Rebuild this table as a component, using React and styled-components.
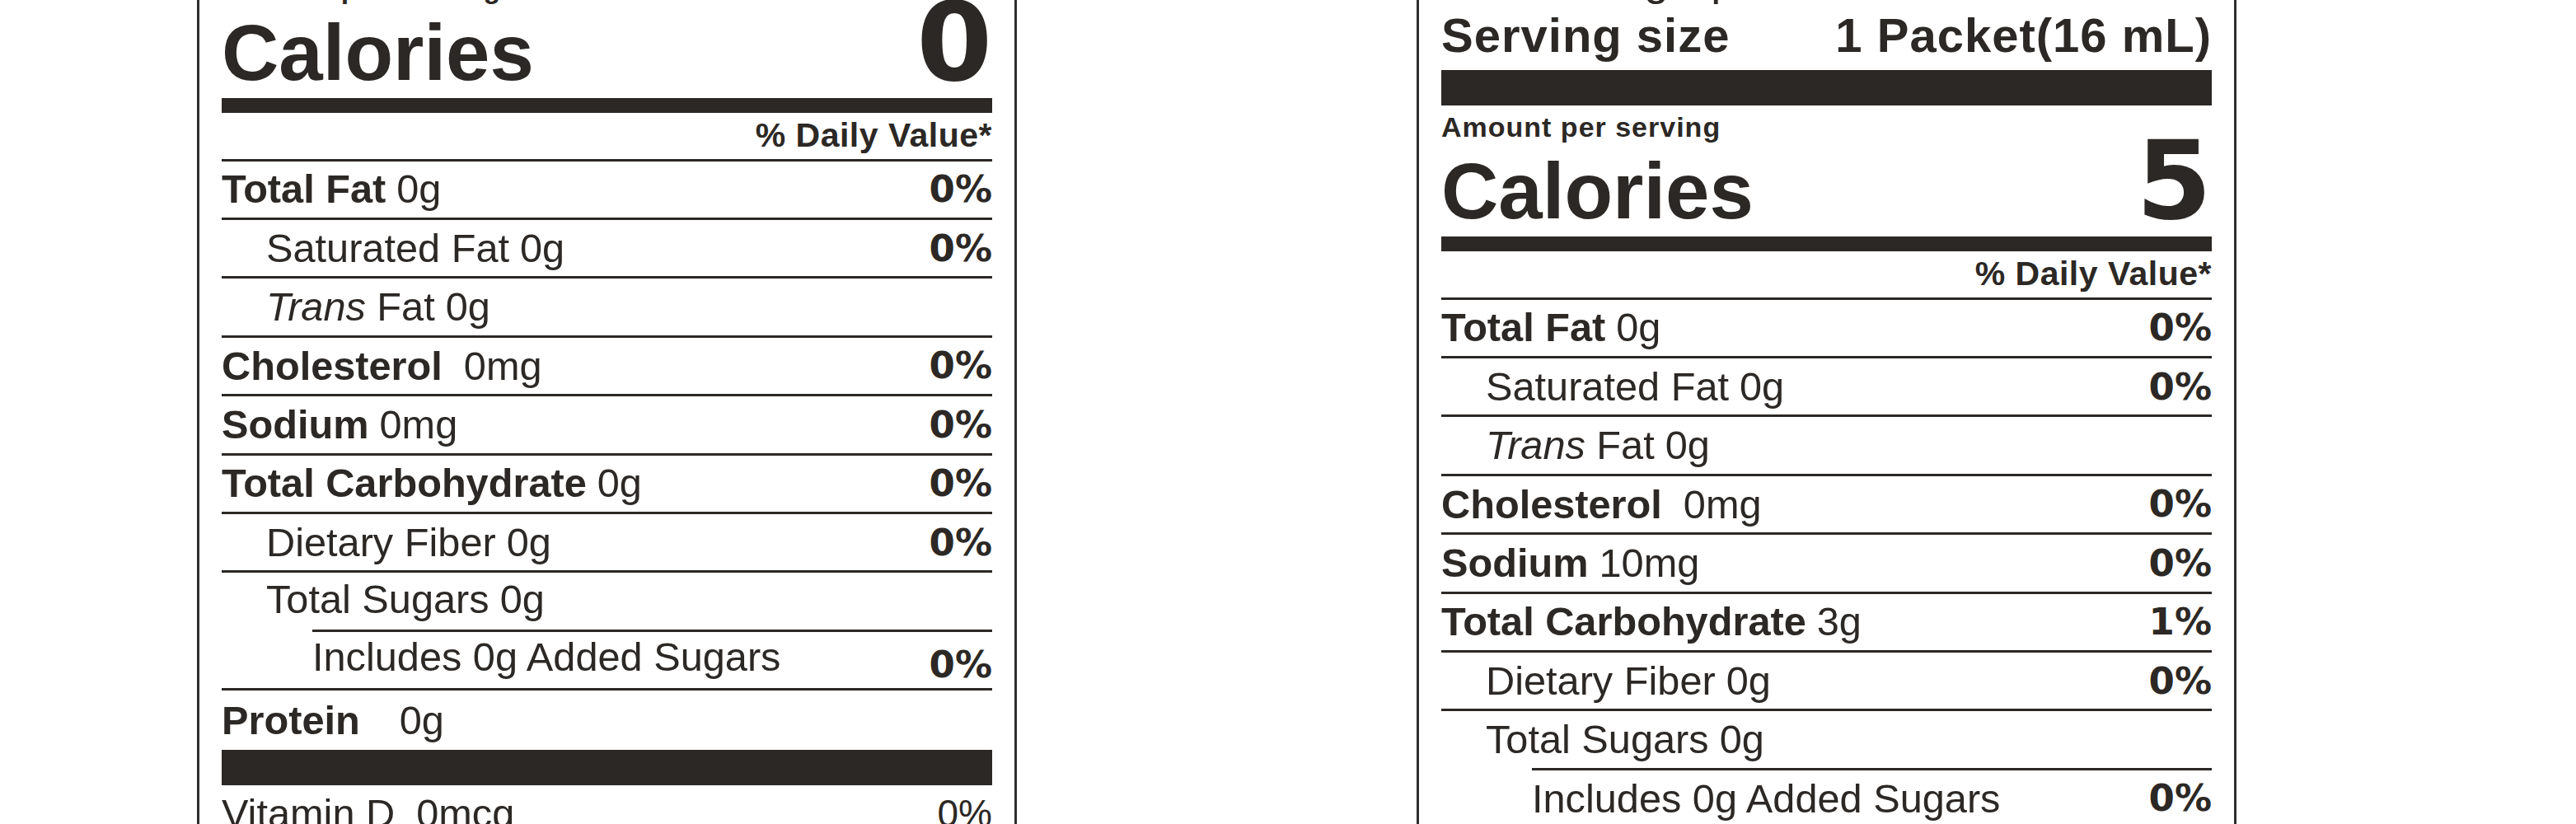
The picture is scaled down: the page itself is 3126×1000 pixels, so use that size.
import React from "react";
import styled, { createGlobalStyle } from "styled-components";

const INK = "#2c2825";

const GlobalStyle = createGlobalStyle`
  html, body {
    margin: 0;
    padding: 0;
    background: #ffffff;
    overflow: hidden;
  }
  body {
    font-family: "Liberation Sans", Arial, sans-serif;
    color: ${INK};
  }
`;

const Page = styled.main`
  display: flex;
  align-items: flex-start;
  gap: 485px;
  padding-left: 239px;
  margin-top: -176px; // the tops of both panels sit above the fold
`;

const Label = styled.section`
  box-sizing: border-box;
  width: 995px;
  flex: none;
  margin-top: ${(p) => (p.$lift ? -p.$lift : 0)}px;
  padding: 10px 27px 24px;
  border: 3px solid #2e2e2e;
  background: #fff;
  display: flex;
  flex-direction: column;
`;

const Title = styled.h1`
  margin: 0;
  font-size: 100px;
  line-height: 1;
  font-weight: 700;
  letter-spacing: -1px;
`;

const Rule = styled.div`
  height: ${(p) => p.$h || 3}px;
  margin-left: ${(p) => p.$inset || 0}px;
  background: ${INK};
  flex: none;
`;

const ServingsLine = styled.div`
  margin-top: 8px;
  font-size: 54px;
  line-height: 54px;
  letter-spacing: 3px;
`;

const ServingRow = styled.div`
  display: flex;
  justify-content: space-between;
  margin: 14px 0 15px;
  font-size: 58px;
  line-height: 54px;
  font-weight: 700;
  letter-spacing: 1px;
`;

const AmountLine = styled.div`
  margin-top: 12px;
  font-size: 34px;
  line-height: 28px;
  font-weight: 700;
  letter-spacing: 1px;
`;

const CaloriesRow = styled.div`
  display: flex;
  justify-content: space-between;
  align-items: baseline;
  margin-bottom: 7px;
`;

const CaloriesWord = styled.span`
  font-size: 96px;
  line-height: 1;
  font-weight: 700;
`;

const BigNumber = styled.span`
  font-family: "DejaVu Sans", sans-serif;
  font-size: 132px;
  line-height: 0.78;
  font-weight: 700;
`;

const DvHeader = styled.div`
  height: 55.6px;
  display: flex;
  justify-content: flex-end;
  align-items: flex-end;
  padding-bottom: 8px;
  box-sizing: border-box;
  font-size: 41px;
  line-height: 1;
  font-weight: 700;
  letter-spacing: 0.5px;
`;

const Row = styled.div`
  height: ${(p) => p.$h || 68.4}px;
  display: flex;
  align-items: center;
  justify-content: space-between;
  padding-left: ${(p) => [0, 54, 110][p.$indent || 0]}px;
  font-size: 48.7px;
  line-height: 1;
`;

const Name = styled.span`
  padding-bottom: ${(p) => p.$lift || 0}px;
  white-space: nowrap;
`;

const Strong = styled.b`
  font-weight: 700;
`;

const Amount = styled.span`
  margin-left: ${(p) => p.$gap || 13}px;
`;

const Pct = styled.span`
  font-family: ${(p) => (p.$plain ? '"Liberation Sans", Arial' : '"DejaVu Sans"')}, sans-serif;
  font-weight: ${(p) => (p.$plain ? 400 : 700)};
  font-size: ${(p) => (p.$plain ? 46 : 45)}px;
  padding-top: ${(p) => p.$drop || 0}px;
`;

const Footnote = styled.p`
  margin: 18px 0 0;
  font-size: 26px;
  line-height: 1.3;
`;

// the left panel's lower rows sit a little off-centre, the right one's don't
const nutrients = ({ sodium, carb, carbDv, offset }) => [
  { name: "Total Fat", bold: true, amt: "0g", dv: "0%" },
  { name: "Saturated Fat", indent: 1, amt: "0g", dv: "0%" },
  { name: <><i>Trans</i> Fat</>, indent: 1, amt: "0g" },
  { name: "Cholesterol", bold: true, amt: "0mg", gap: 26, dv: "0%" },
  { name: "Sodium", bold: true, amt: sodium, dv: "0%" },
  { name: "Total Carbohydrate", bold: true, amt: carb, dv: carbDv },
  { name: "Dietary Fiber", indent: 1, amt: "0g", dv: "0%" },
  { name: "Total Sugars", indent: 1, amt: "0g", lift: offset ? 4 : 0, rule: 110 },
  { name: "Includes 0g Added Sugars", indent: 2, dv: "0%", lift: offset ? 8 : 0, drop: offset ? 12 : 0 },
  { name: "Protein", bold: true, amt: "0g", gap: 48, h: 72, bar: true },
];

const vitamins = [
  { name: "Vitamin D", amt: "0mcg" },
  { name: "Calcium", amt: "0mg" },
  { name: "Iron", amt: "0mg" },
  { name: "Potassium", amt: "0mg" },
];

const NutritionLabel = (props) => (
  <Label $lift={props.lift}>
    <Title>Nutrition Facts</Title>
    <Rule />
    <ServingsLine>12 servings per container</ServingsLine>
    <ServingRow>
      <span>Serving size</span>
      <span>1 Packet(16 mL)</span>
    </ServingRow>
    <Rule $h={43} />
    <AmountLine>Amount per serving</AmountLine>
    <CaloriesRow>
      <CaloriesWord>Calories</CaloriesWord>
      <BigNumber>{props.calories}</BigNumber>
    </CaloriesRow>
    <Rule $h={18} />
    <DvHeader>% Daily Value*</DvHeader>
    <Rule />
    {nutrients(props).map((n, i) => (
      <React.Fragment key={i}>
        <Row $indent={n.indent} $h={n.h}>
          <Name $lift={n.lift}>
            {n.bold ? <Strong>{n.name}</Strong> : n.name}
            {n.amt && <Amount $gap={n.gap}>{n.amt}</Amount>}
          </Name>
          {n.dv && <Pct $drop={n.drop}>{n.dv}</Pct>}
        </Row>
        {n.bar ? <Rule $h={42.6} /> : <Rule $inset={n.rule} />}
      </React.Fragment>
    ))}
    {vitamins.map((v) => (
      <React.Fragment key={v.name}>
        <Row>
          <Name>
            {v.name}
            <Amount $gap={26}>{v.amt}</Amount>
          </Name>
          <Pct $plain>0%</Pct>
        </Row>
        <Rule />
      </React.Fragment>
    ))}
    <Footnote>
      *The % Daily Value (DV) tells you how much a nutrient in a serving of food
      contributes to a daily diet. 2,000 calories a day is used for general
      nutrition advice.
    </Footnote>
  </Label>
);

export default function App() {
  return (
    <>
      <GlobalStyle />
      <Page>
        <NutritionLabel lift={168} offset calories="0" sodium="0mg" carb="0g" carbDv="0%" />
        <NutritionLabel calories="5" sodium="10mg" carb="3g" carbDv="1%" />
      </Page>
    </>
  );
}
